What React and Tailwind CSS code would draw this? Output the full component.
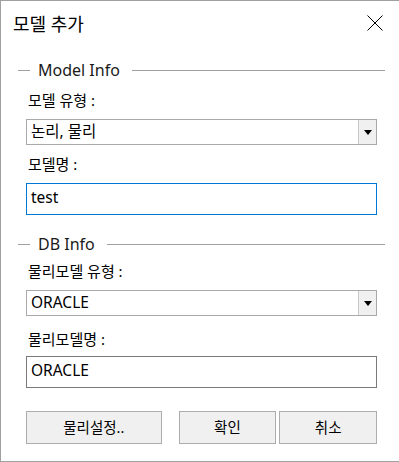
import React from "react";

const font = "font-['Noto_Sans','Noto_Sans_CJK_KR',sans-serif]";

const GroupHeader = ({ title, className }) => (
  <div className={`flex items-center h-[20px] ${className}`}>
    <div className="ml-[17px] w-[12px] h-px bg-[#a0a0a0]" />
    <span className="ml-[8px] text-[16px] leading-none text-[#1a1a1a]">{title}</span>
    <div className="flex-1 ml-[12px] mr-[14px] h-px bg-[#a0a0a0]" />
  </div>
);

const Label = ({ children, className }) => (
  <div className={`h-[20px] flex items-center px-[27px] text-[15px] text-black ${className}`}>{children}</div>
);

const Select = ({ value, className }) => (
  <div className={`ml-[25px] mr-[22px] h-[26px] border border-[#a9a9a9] flex ${className}`}>
    <div className="flex-1 flex items-center pl-[4px] text-[15.5px] text-black">{value}</div>
    <div className="w-[18px] border-l border-[#c8c8c8] bg-[#f0f0f0] flex items-center justify-center">
      <svg width="8" height="5" viewBox="0 0 8 5">
        <polygon points="0,0 8,0 4,5" fill="#000" />
      </svg>
    </div>
  </div>
);

const Input = ({ value, focused, className }) => (
  <div
    className={`ml-[25px] mr-[22px] h-[32px] border ${focused ? "border-[#0078d7]" : "border-[#7a7a7a]"} flex items-center pl-[4px] pb-[2px] text-[15.5px] text-black ${className}`}
  >
    {value}
  </div>
);

const Button = ({ children, className }) => (
  <button className={`h-[33px] border border-[#adadad] bg-[#f0f0f0] text-[14.5px] text-black ${className}`}>
    {children}
  </button>
);

export default function App() {
  return (
    <div className={`w-[399px] h-[462px] bg-white border-l border-t border-b border-[#a0a0a0] flex flex-col ${font}`}>
      <div className="h-[46px] flex items-center justify-between pl-[12px] pr-[16px]">
        <span className="text-[18px] text-black">모델 추가</span>
        <svg width="16" height="16" viewBox="0 0 16 16" className="-mt-[3px]">
          <path d="M0.5 0.5 L15.5 15.5 M15.5 0.5 L0.5 15.5" stroke="#000" strokeWidth="1" />
        </svg>
      </div>

      <GroupHeader title="Model Info" className="mt-[13px]" />
      <Label className="mt-[10px]">모델 유형 :</Label>
      <Select value="논리, 물리" className="mt-[9px]" />
      <Label className="mt-[9px]">모델명 :</Label>
      <Input value="test" focused className="mt-[9px]" />

      <GroupHeader title="DB Info" className="mt-[19px]" />
      <Label className="mt-[7px]">물리모델 유형 :</Label>
      <Select value="ORACLE" className="mt-[9px]" />
      <Label className="mt-[13px]">물리모델명 :</Label>
      <Input value="ORACLE" className="mt-[7px]" />

      <div className="mt-[23px] ml-[25px] mr-[22px] flex">
        <Button className="w-[136px]">물리설정..</Button>
        <Button className="w-[98px] ml-[17px]">확인</Button>
        <Button className="w-[98px] ml-[3px]">취소</Button>
      </div>
    </div>
  );
}
